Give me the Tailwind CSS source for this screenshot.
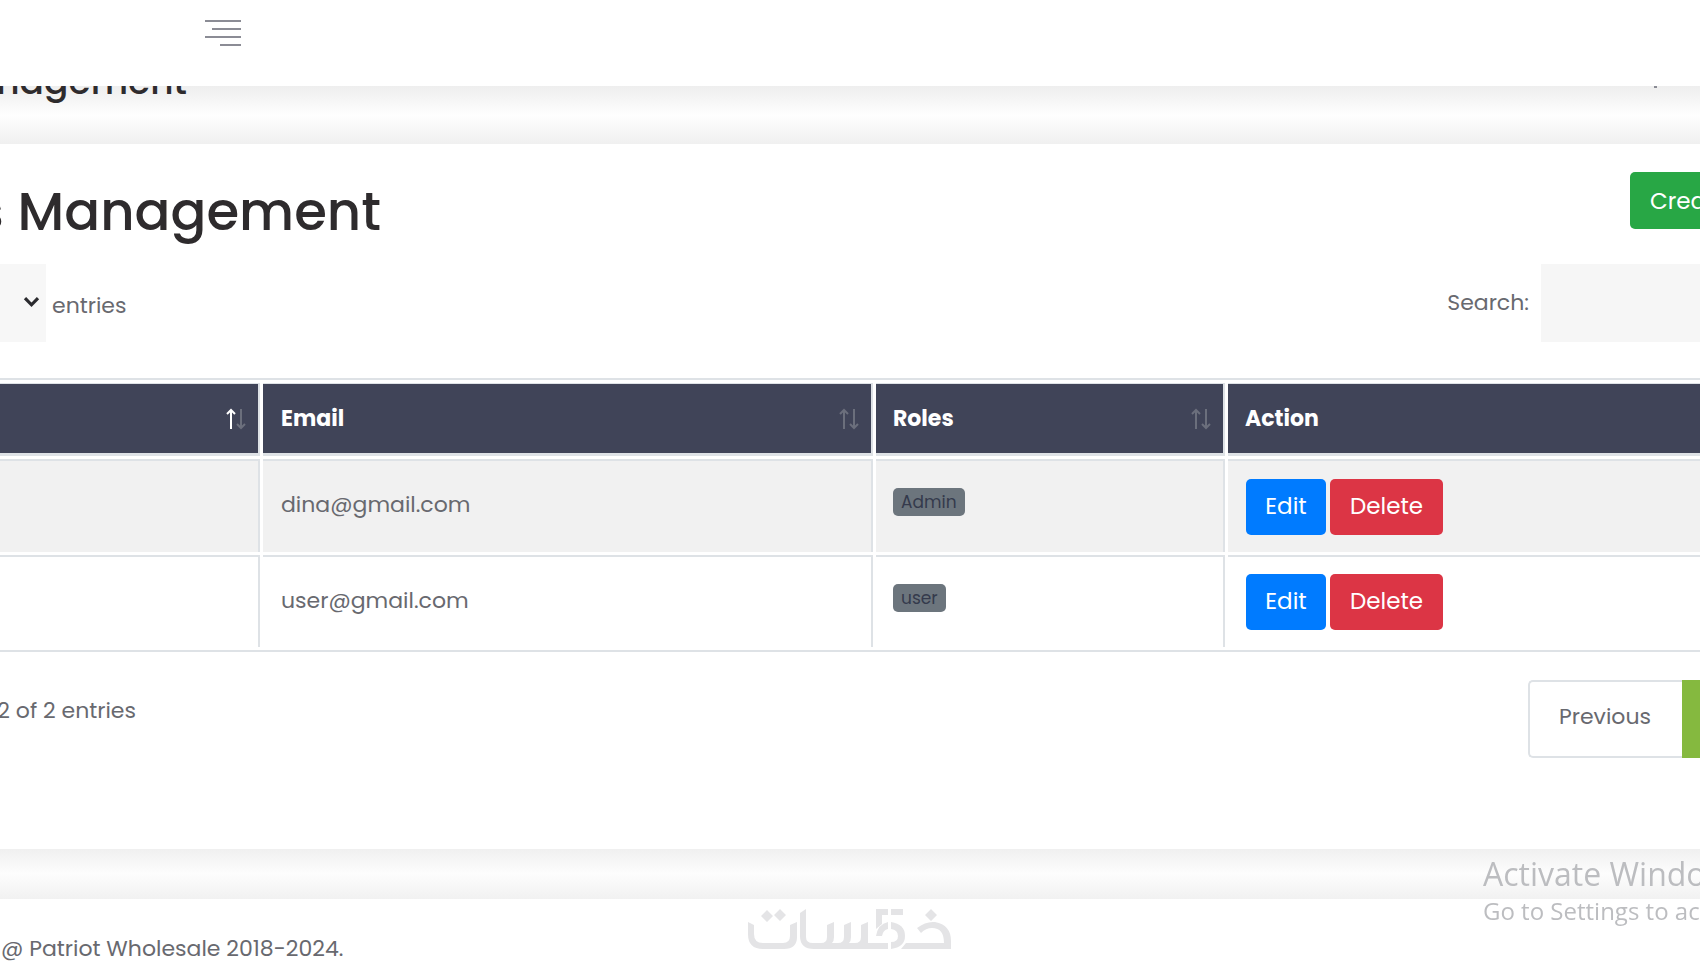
<!DOCTYPE html>
<html lang="en">
<head>
<meta charset="utf-8">
<title>Users Management</title>
<script src="https://cdn.jsdelivr.net/npm/@tailwindcss/browser@4"></script>
</head>
<body class="min-h-screen overflow-x-hidden bg-white font-[Poppins,Inter,sans-serif] text-[22px] leading-8 text-[#68696f]">

<header class="flex h-[86px] items-start bg-white pt-[19px] pl-[205px]">
  <button type="button" aria-label="Toggle menu">
    <svg class="block h-7 w-9" viewBox="0 0 36 28" fill="none" stroke="#8b8c95" stroke-width="2"><path d="M0 2H36M7 10H36M0 18H36M15 26H36"/></svg>
  </button>
</header>

<div class="flex h-[58px] items-start justify-between overflow-hidden bg-linear-to-b from-[#eeeeee] via-[#fefefe] to-[#f0f0f0]">
  <div class="flex w-[187px] shrink-0 justify-end">
    <h2 class="-mt-6 whitespace-nowrap text-[36px] leading-10 font-medium text-[#2e2b2d]">Users Management</h2>
  </div>
  <span class="mr-[43px] h-[2px] w-[3px] bg-[#8b8c95]"></span>
</div>

<main class="overflow-hidden bg-white pt-7 pb-[91px]">
  <div class="flex items-start justify-between pb-3">
    <div class="flex w-[381px] justify-end">
      <h1 class="whitespace-nowrap text-[53px] leading-[80px] font-medium text-[#2e2b2d]">Users Management</h1>
    </div>
    <div class="w-[70px]">
      <a href="#" class="flex h-[57px] w-[240px] items-center rounded-[5px] bg-[#28a745] pl-5 text-[23px] whitespace-nowrap text-white">Create New User</a>
    </div>
  </div>

  <div class="flex items-start justify-between">
    <label class="flex items-center">
      <span class="relative block">
        <select aria-label="Entries per page" class="block h-[78px] w-[46px] appearance-none bg-[#f7f7f7] text-transparent"><option>10</option><option>25</option></select>
        <svg class="pointer-events-none absolute top-8 left-[23px] h-3 w-[17px]" viewBox="0 0 17 12" fill="none" stroke="#2b2b2f" stroke-width="3.2"><path d="M2 2.2L8.5 8.8L15 2.2"/></svg>
      </span>
      <span class="pt-1.5 pl-1.5">entries</span>
    </label>
    <label class="flex items-center gap-3">Search:
      <input type="search" class="h-[78px] w-[159px] bg-[#f6f6f6] px-4 outline-none">
    </label>
  </div>

  <div class="mt-9 border-y-2 border-[#dee2e6]">
    <table class="-ml-[3px] w-[calc(100%+6px)] table-fixed border-separate border-spacing-x-[3px] border-spacing-y-[3px] text-left">
      <colgroup><col class="w-[260px]"><col class="w-[610px]"><col class="w-[349px]"><col></colgroup>
      <thead>
        <tr class="h-[73px] text-white">
          <th aria-sort="ascending" class="border-t border-r-2 border-b-3 border-[#dee2e6] bg-[#404458] bg-clip-padding pr-3">
            <svg class="ml-auto h-[22px] w-5" viewBox="0 0 20 22" fill="none" stroke-width="2"><path stroke="#fff" d="M5 21V2M1 6L5 2L9 6"/><path stroke="#6b6f7c" d="M15 1V20M11 16L15 20L19 16"/></svg>
          </th>
          <th class="border-t border-r-2 border-b-3 border-[#dee2e6] bg-[#404458] bg-clip-padding pr-3 pl-[18px]">
            <div class="flex items-center justify-between">Email
              <svg class="h-[22px] w-5" viewBox="0 0 20 22" fill="none" stroke="#6b6f7c" stroke-width="2"><path d="M5 21V2M1 6L5 2L9 6M15 1V20M11 16L15 20L19 16"/></svg>
            </div>
          </th>
          <th class="border-t border-r-2 border-b-3 border-[#dee2e6] bg-[#404458] bg-clip-padding pr-3 pl-[17px]">
            <div class="flex items-center justify-between">Roles
              <svg class="h-[22px] w-5" viewBox="0 0 20 22" fill="none" stroke="#6b6f7c" stroke-width="2"><path d="M5 21V2M1 6L5 2L9 6M15 1V20M11 16L15 20L19 16"/></svg>
            </div>
          </th>
          <th class="border-t border-b-3 border-[#dee2e6] bg-[#404458] bg-clip-padding pl-[17px]">Action</th>
        </tr>
      </thead>
      <tbody>
        <tr class="h-[93px]">
          <td class="border-t-2 border-r-2 border-[#dee2e6] bg-[#f1f1f1]"></td>
          <td class="border-t-2 border-r-2 border-[#dee2e6] bg-[#f1f1f1] pb-1 pl-[18px]">dina@gmail.com</td>
          <td class="border-t-2 border-r-2 border-[#dee2e6] bg-[#f1f1f1] pb-2.5 pl-[17px]"><span class="flex h-7 w-fit items-center rounded-[5px] bg-[#6c757d] px-2 text-[17px] text-[#343a4c]">Admin</span></td>
          <td class="border-t-2 border-[#dee2e6] bg-[#f1f1f1] pl-[18px]">
            <div class="flex gap-1 text-[23px] text-white"><a href="#" class="flex h-14 w-20 items-center justify-center rounded-[5px] bg-[#007bff] pb-0.5">Edit</a><button type="button" class="h-14 w-[113px] rounded-[5px] bg-[#dc3545] pb-0.5">Delete</button></div>
          </td>
        </tr>
        <tr class="h-[92px]">
          <td class="border-t-2 border-r-2 border-[#dee2e6]"></td>
          <td class="border-t-2 border-r-2 border-[#dee2e6] pb-0.5 pl-[18px]">user@gmail.com</td>
          <td class="border-t-2 border-r-2 border-[#dee2e6] pb-2 pl-[17px]"><span class="flex h-7 w-fit items-center rounded-[5px] bg-[#6c757d] px-2 text-[17px] text-[#343a4c]">user</span></td>
          <td class="border-t-2 border-[#dee2e6] pl-[18px]">
            <div class="flex gap-1 text-[23px] text-white"><a href="#" class="flex h-14 w-20 items-center justify-center rounded-[5px] bg-[#007bff] pb-0.5">Edit</a><button type="button" class="h-14 w-[113px] rounded-[5px] bg-[#dc3545] pb-0.5">Delete</button></div>
          </td>
        </tr>
      </tbody>
    </table>
  </div>

  <div class="mt-7 flex items-start justify-between">
    <div class="flex w-[136px] justify-end pt-[15px]"><p class="whitespace-nowrap">Showing 1 to 2 of 2 entries</p></div>
    <nav aria-label="Pages" class="flex h-[78px]">
      <a href="#" class="flex w-[154px] items-center justify-center rounded-l-[5px] border-2 border-r-0 border-[#dee2e6] pr-0.5 pb-1">Previous</a>
      <a href="#" aria-label="Page 1" class="w-[18px] bg-[#85b93f]"></a>
    </nav>
  </div>
</main>

<div class="h-[50px] bg-linear-to-b from-[#f0f0f0] via-[#fdfdfd] to-[#f1f1f1]"></div>

<footer class="bg-white pt-[34px]">
  <p class="pl-px">@ Patriot Wholesale 2018-2024.</p>
</footer>

<svg class="fixed bottom-5 left-[44%] h-[41px] w-[204px]" viewBox="0 0 204 41" fill="#e4e4e6" role="img" aria-label="Khamsat">
  <path d="M0 13L6 16V25Q6 34 15 34H35Q42 34 42 27V16L49 13V28Q49 40 36 40H15Q0 40 0 25Z"/>
  <path d="M13 7L19 1L25 7L19 13ZM26 6L32 0L38 6L32 12Z"/>
  <path d="M52 4L58 0V28Q58 34 65 34H73Q79 34 79 28V16L86 13V28Q86 32 84 34H90Q96 34 96 28V16L103 13V28Q103 32 101 34H107Q113 34 113 28V16L120 13V34H140V40H66Q52 40 52 27Z"/>
  <path d="M128 0H140V6H134V15L128 20ZM143 0H155V6H143ZM128 27Q130 15 140 13V20Q135 21 134 27ZM143 13Q157 15 157 27Q157 38 143 40V33Q150 33 150 27Q150 21 143 20Z"/>
  <path d="M177 6L183 0L189 6L183 12ZM169 19Q178 12 187 13Q203 16 203 32V40H153L158 34H196Q196 19 184 19Q178 19 173 24Z"/>
</svg>

<aside class="fixed top-[856px] left-[1483px] font-['Open_Sans',sans-serif] whitespace-nowrap text-[#bcbdc0]">
  <p class="text-[32px] leading-9">Activate Windows</p>
  <p class="text-[24px] leading-[38px]">Go to Settings to activate Windows.</p>
</aside>
</body>
</html>
